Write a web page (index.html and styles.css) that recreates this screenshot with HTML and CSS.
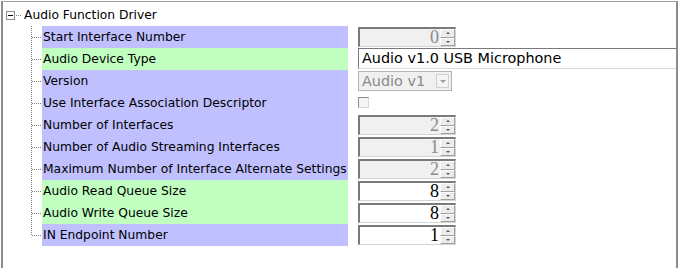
FILE: index.html
```html
<!DOCTYPE html>
<html lang="en">
<head>
    <meta charset="UTF-8">
    <title>Audio Function Driver</title>
    <link rel="stylesheet" href="styles.css">
</head>
<body>
    <div class="panel">
        <div class="node">
            <span class="expander"><span class="minus"></span></span>
            <span class="stub"></span>
            <span class="node-title">Audio Function Driver</span>
        </div>

        <div class="children">
            <div class="row">
                <div class="label ro">Start Interface Number</div>
                <div class="value">
                    <div class="spin disabled"><span class="spin-val">0</span><span class="spin-btns"><i class="up"></i><i class="down"></i></span></div>
                </div>
            </div>
            <div class="row">
                <div class="label rw">Audio Device Type</div>
                <div class="value">
                    <div class="textbox">Audio v1.0 USB Microphone</div>
                </div>
            </div>
            <div class="row">
                <div class="label ro">Version</div>
                <div class="value">
                    <div class="combo disabled"><span class="combo-val">Audio v1</span><span class="combo-btn"></span></div>
                </div>
            </div>
            <div class="row">
                <div class="label ro">Use Interface Association Descriptor</div>
                <div class="value">
                    <span class="check"></span>
                </div>
            </div>
            <div class="row">
                <div class="label ro">Number of Interfaces</div>
                <div class="value">
                    <div class="spin disabled"><span class="spin-val">2</span><span class="spin-btns"><i class="up"></i><i class="down"></i></span></div>
                </div>
            </div>
            <div class="row">
                <div class="label ro">Number of Audio Streaming Interfaces</div>
                <div class="value">
                    <div class="spin disabled"><span class="spin-val">1</span><span class="spin-btns"><i class="up"></i><i class="down"></i></span></div>
                </div>
            </div>
            <div class="row">
                <div class="label ro">Maximum Number of Interface Alternate Settings</div>
                <div class="value">
                    <div class="spin disabled"><span class="spin-val">2</span><span class="spin-btns"><i class="up"></i><i class="down"></i></span></div>
                </div>
            </div>
            <div class="row">
                <div class="label rw">Audio Read Queue Size</div>
                <div class="value">
                    <div class="spin"><span class="spin-val">8</span><span class="spin-btns"><i class="up"></i><i class="down"></i></span></div>
                </div>
            </div>
            <div class="row">
                <div class="label rw">Audio Write Queue Size</div>
                <div class="value">
                    <div class="spin"><span class="spin-val">8</span><span class="spin-btns"><i class="up"></i><i class="down"></i></span></div>
                </div>
            </div>
            <div class="row last">
                <div class="label ro">IN Endpoint Number</div>
                <div class="value">
                    <div class="spin"><span class="spin-val">1</span><span class="spin-btns"><i class="up"></i><i class="down"></i></span></div>
                </div>
            </div>
        </div>
    </div>
</body>
</html>
```

FILE: styles.css
```css
html, body {
    margin: 0;
    padding: 0;
    background-color: #fff;
    overflow: hidden;
}
body {
    font-family: "DejaVu Sans", Verdana, sans-serif;
    font-size: 12.3px;
    color: #000;
}

.panel {
    margin: 1px 0 0 1px;
    width: 673px;
    height: 267px;
    box-sizing: border-box;
    border-top: 1px solid #a0a0a0;
    border-left: 2px solid #8c8c8c;
    border-right: 2px solid #8c8c8c;
    box-sizing: content-box;
}

/* tree node header */
.node {
    display: flex;
    align-items: center;
    height: 18px;
    padding: 4px 0 0 3px;
}
.expander {
    width: 9px;
    height: 9px;
    box-sizing: border-box;
    border: 1px solid #8c8c8c;
    background-color: #fff;
    display: flex;
    align-items: center;
    justify-content: center;
}
.minus {
    width: 5px;
    height: 1px;
    background-color: #000;
}
.stub {
    width: 6px;
    height: 1px;
    margin: 0 2px 0 1px;
    background: repeating-linear-gradient(to right, #808080 0 1px, transparent 1px 2px);
}
.node-title {
    line-height: 18px;
}

.children {
    padding-top: 2px;
}

/* property rows */
.row {
    display: grid;
    grid-template-columns: 306px 1fr;
    column-gap: 10px;
    height: 22px;
    padding-left: 39px;
    background:
        repeating-linear-gradient(to bottom, #808080 0 1px, transparent 1px 2px) 28px 0 / 1px 100% no-repeat,
        repeating-linear-gradient(to right, #808080 0 1px, transparent 1px 2px) 29px 11px / 10px 1px no-repeat;
}
.row.last {
    background:
        repeating-linear-gradient(to bottom, #808080 0 1px, transparent 1px 2px) 28px 0 / 1px 12px no-repeat,
        repeating-linear-gradient(to right, #808080 0 1px, transparent 1px 2px) 29px 11px / 10px 1px no-repeat;
}
.label {
    line-height: 22px;
    padding-left: 1px;
    white-space: nowrap;
    overflow: hidden;
}
.label.ro {
    background-color: #c0c0ff;
}
.label.rw {
    background-color: #c0ffc0;
}
.value {
    display: flex;
    align-items: flex-start;
}

/* spinner */
.spin {
    display: flex;
    width: 98px;
    height: 20px;
    margin-top: 1px;
    box-sizing: border-box;
    border-top: 2px solid #7a7a7a;
    border-left: 2px solid #7a7a7a;
    border-bottom: 1px solid #d4d4d4;
    border-right: 1px solid #d4d4d4;
    background-color: #fff;
}
.spin.disabled {
    background-color: #f0f0f0;
}
.spin-val {
    flex: 1;
    text-align: right;
    font-family: "Liberation Serif", "Times New Roman", serif;
    font-size: 18px;
    line-height: 17px;
    padding-right: 1px;
}
.spin.disabled .spin-val {
    color: #8a8a8a;
}
.spin-btns {
    display: flex;
    flex-direction: column;
    width: 15px;
}
.spin-btns i {
    flex: 1;
    display: flex;
    align-items: center;
    justify-content: center;
    background-color: #ececec;
    border-top: 1px solid #fff;
    border-left: 1px solid #fff;
    border-bottom: 1px solid #a0a0a0;
    border-right: 1px solid #a0a0a0;
}
.spin-btns i::after {
    content: "";
    border-left: 2px solid transparent;
    border-right: 2px solid transparent;
}
.spin-btns .up::after {
    border-bottom: 2px solid #555;
}
.spin-btns .down::after {
    border-top: 2px solid #555;
}

/* text field */
.textbox {
    flex: 1;
    height: 21px;
    box-sizing: border-box;
    border-top: 1px solid #7a7a7a;
    border-left: 1px solid #7a7a7a;
    border-bottom: 1px solid #dcdcdc;
    padding-left: 3px;
    font-size: 14.4px;
    line-height: 19px;
    white-space: nowrap;
}

/* combo box */
.combo {
    display: flex;
    align-items: center;
    width: 94px;
    height: 20px;
    margin-top: 1px;
    box-sizing: border-box;
    border: 1px solid #b4b4b4;
    background-color: #f0f0f0;
}
.combo-val {
    flex: 1;
    padding-left: 3px;
    font-size: 14.4px;
    color: #8a8a8a;
    white-space: nowrap;
}
.combo-btn {
    width: 13px;
    height: 14px;
    margin-right: 2px;
    box-sizing: border-box;
    border: 1px solid #d0d0d0;
    background-color: #f4f4f4;
    display: flex;
    align-items: center;
    justify-content: center;
}
.combo-btn::after {
    content: "";
    border-left: 3px solid transparent;
    border-right: 3px solid transparent;
    border-top: 3px solid #9a9a9a;
}

/* check box */
.check {
    width: 11px;
    height: 11px;
    margin-top: 5px;
    box-sizing: border-box;
    border-top: 1px solid #8c8c8c;
    border-left: 1px solid #8c8c8c;
    border-bottom: 1px solid #d8d8d8;
    border-right: 1px solid #d8d8d8;
    background-color: #f4f4f4;
}
```
